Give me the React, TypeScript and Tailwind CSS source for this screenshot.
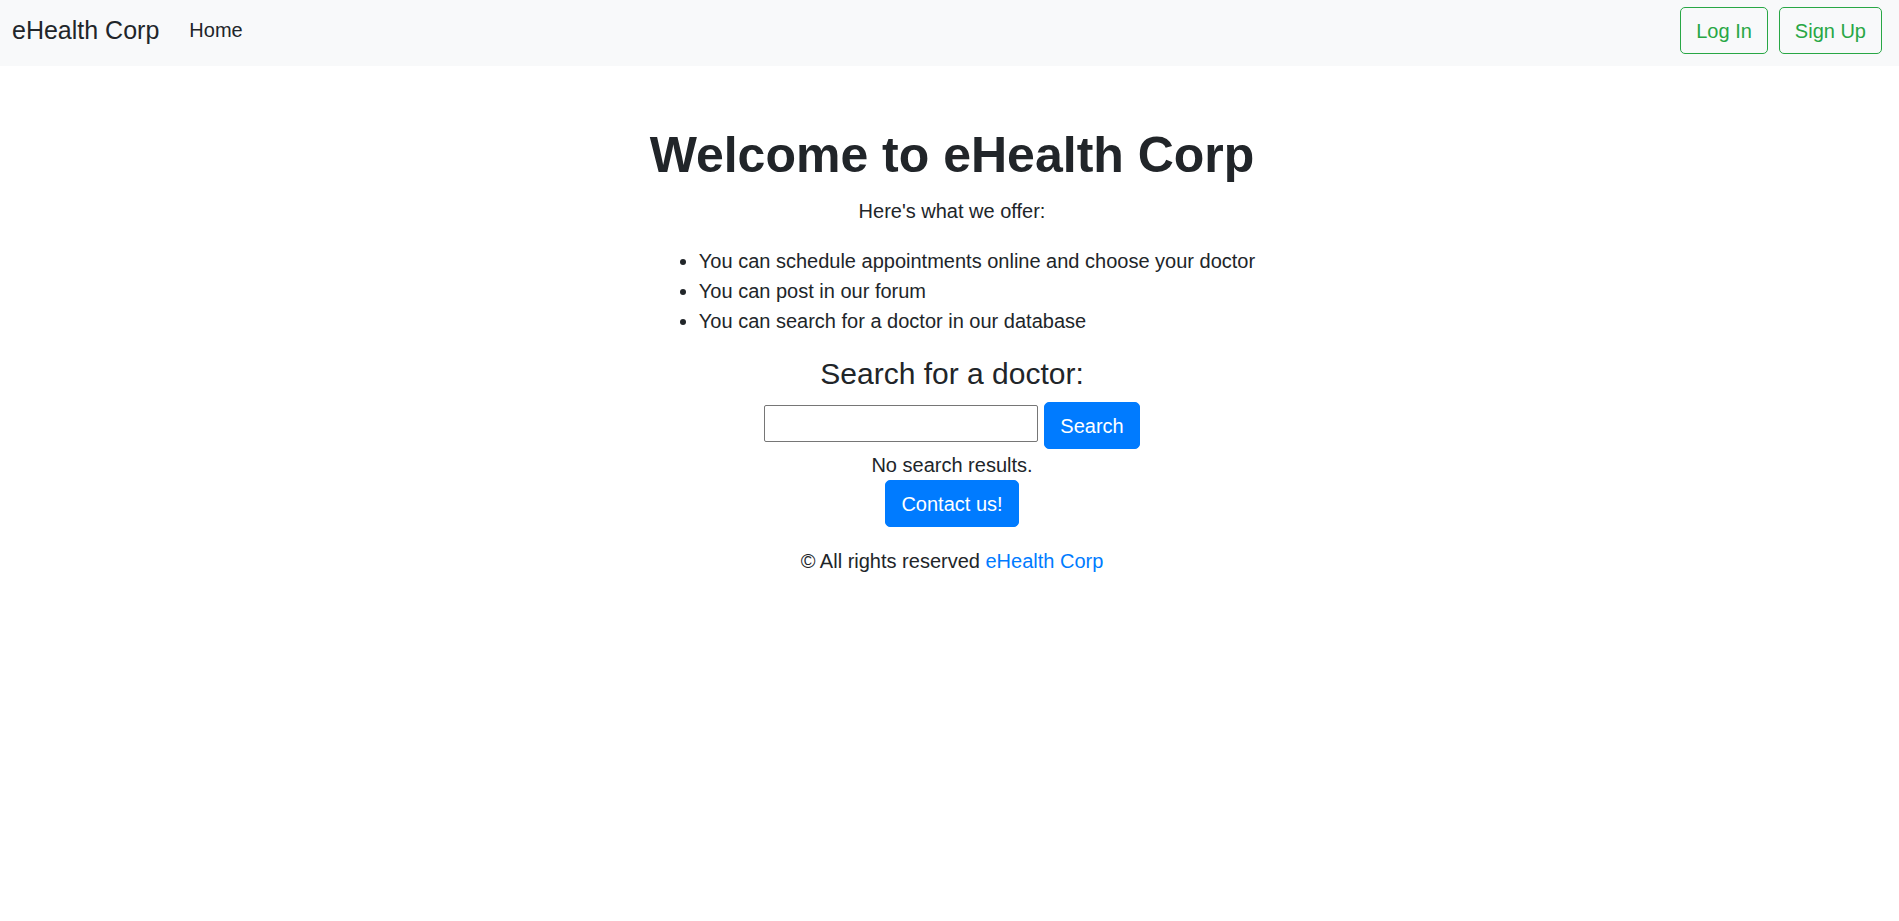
export default function App() {
  return (
    <div className="min-h-screen bg-white text-[#212529] font-['Liberation_Sans',Arial,sans-serif] text-[20px] leading-[30px]">
      {/* navbar */}
      <nav className="h-[66px] bg-[#f8f9fa] flex items-start pt-[7px] pl-[12px] pr-[17px]">
        <a href="#" className="text-[25px] leading-[47px] text-[#212529]">
          eHealth Corp
        </a>
        <a href="#" className="ml-[30px] text-[20px] leading-[47px] text-[#212529]">
          Home
        </a>
        <div className="ml-auto flex gap-[11px]">
          <button
            type="button"
            className="h-[47px] px-[15px] border border-[#28a745] rounded-[5px] text-[#28a745] text-[20px]"
          >
            Log In
          </button>
          <button
            type="button"
            className="h-[47px] px-[15px] border border-[#28a745] rounded-[5px] text-[#28a745] text-[20px]"
          >
            Sign Up
          </button>
        </div>
      </nav>

      <main className="text-center pl-[5px] pt-[59px]">
        <h1 className="text-[50px] leading-[60px] font-bold mb-[11px]">Welcome to eHealth Corp</h1>
        <p className="mb-[20px]">Here's what we offer:</p>
        <ul className="inline-block text-left list-disc pl-[50px] mb-[20px]">
          <li>You can schedule appointments online and choose your doctor</li>
          <li>You can post in our forum</li>
          <li>You can search for a doctor in our database</li>
        </ul>
        <h3 className="text-[30px] leading-[36px] mb-[10px]">Search for a doctor:</h3>
        <div className="flex justify-center items-start gap-[6px]">
          <input
            type="text"
            className="mt-[3px] w-[274px] h-[37px] border border-[#767676] rounded-[2px] px-2 text-[20px] outline-none"
          />
          <button
            type="button"
            className="h-[47px] px-[15px] bg-[#007bff] border border-[#007bff] rounded-[5px] text-white text-[20px]"
          >
            Search
          </button>
        </div>
        <p className="mt-[1px]">No search results.</p>
        <button
          type="button"
          className="h-[47px] px-[15px] bg-[#007bff] border border-[#007bff] rounded-[5px] text-white text-[20px]"
        >
          Contact us!
        </button>
        <footer className="mt-[19px]">
          © All rights reserved{' '}
          <a href="#" className="text-[#007bff]">
            eHealth Corp
          </a>
        </footer>
      </main>
    </div>
  );
}
